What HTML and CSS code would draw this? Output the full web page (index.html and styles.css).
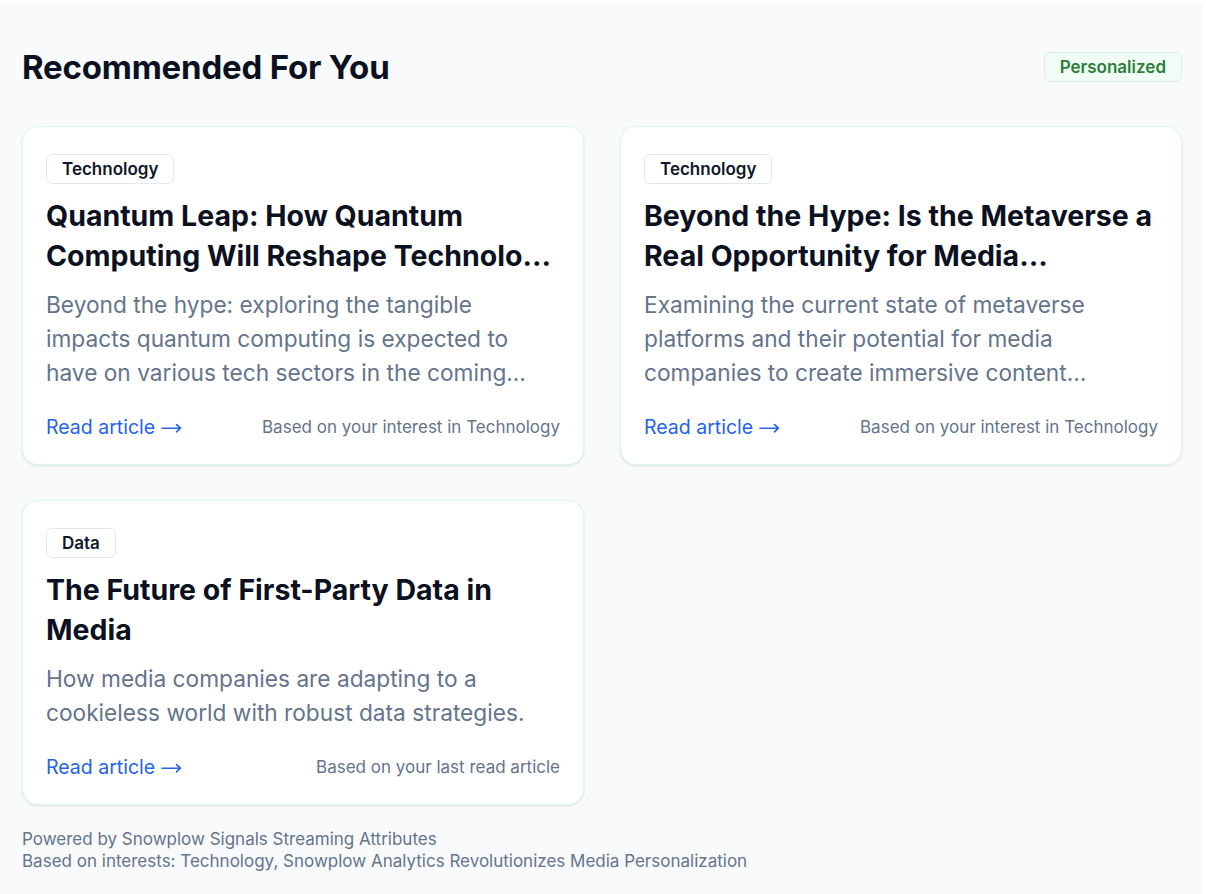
FILE: index.html
```html
<!DOCTYPE html>
<html lang="en">
<head>
<meta charset="utf-8">
<title>Recommended For You</title>
<link rel="stylesheet" href="styles.css">
</head>
<body>
<section class="panel">
  <header class="panel-head">
    <h2 class="panel-title">Recommended For You</h2>
    <span class="badge">Personalized</span>
  </header>
  <div class="grid">
    <article class="card">
      <span class="tag">Technology</span>
      <h3 class="card-title">Quantum Leap: How Quantum Computing Will Reshape Technology Industries in the Next Decade</h3>
      <p class="card-desc">Beyond the hype: exploring the tangible impacts quantum computing is expected to have on various tech sectors in the coming years and what it means for business.</p>
      <div class="card-foot">
        <a class="read" href="#">Read article<svg class="arrow" viewBox="0 0 21 10" width="21" height="10" aria-hidden="true"><path d="M1 5.2H19.5M15.5 1.6L19.5 5.2L15.5 8.8" fill="none" stroke="currentColor" stroke-width="1.6" stroke-linecap="round" stroke-linejoin="round"/></svg></a>
        <span class="reason">Based on your interest in Technology</span>
      </div>
    </article>
    <article class="card">
      <span class="tag">Technology</span>
      <h3 class="card-title">Beyond the Hype: Is the Metaverse a Real Opportunity for Media Companies?</h3>
      <p class="card-desc">Examining the current state of metaverse platforms and their potential for media companies to create immersive content experiences and new revenue streams.</p>
      <div class="card-foot">
        <a class="read" href="#">Read article<svg class="arrow" viewBox="0 0 21 10" width="21" height="10" aria-hidden="true"><path d="M1 5.2H19.5M15.5 1.6L19.5 5.2L15.5 8.8" fill="none" stroke="currentColor" stroke-width="1.6" stroke-linecap="round" stroke-linejoin="round"/></svg></a>
        <span class="reason">Based on your interest in Technology</span>
      </div>
    </article>
    <article class="card">
      <span class="tag">Data</span>
      <h3 class="card-title">The Future of First-Party Data in Media</h3>
      <p class="card-desc">How media companies are adapting to a cookieless world with robust data strategies.</p>
      <div class="card-foot">
        <a class="read" href="#">Read article<svg class="arrow" viewBox="0 0 21 10" width="21" height="10" aria-hidden="true"><path d="M1 5.2H19.5M15.5 1.6L19.5 5.2L15.5 8.8" fill="none" stroke="currentColor" stroke-width="1.6" stroke-linecap="round" stroke-linejoin="round"/></svg></a>
        <span class="reason">Based on your last read article</span>
      </div>
    </article>
  </div>
  <footer class="panel-foot">
    <div>Powered by Snowplow Signals Streaming Attributes</div>
    <div>Based on interests: Technology, Snowplow Analytics Revolutionizes Media Personalization</div>
  </footer>
</section>
</body>
</html>
```

FILE: styles.css
```css
* { box-sizing: border-box; }
html, body { margin: 0; padding: 0; background: #ffffff; }
body {
  font-family: Inter, "Noto Sans", "Liberation Sans", sans-serif;
  color: #0f172a;
}
.panel {
  margin: 4px 3px 0 0;
  background: #f8fafc;
  padding: 43px 21px 30px 22px;
  min-height: 890px;
}
.panel-head {
  display: flex;
  align-items: center;
  justify-content: space-between;
  height: 40px;
  margin-bottom: 39px;
}
.panel-title {
  margin: 0;
  font-size: 33px;
  font-weight: 700;
  letter-spacing: -0.2px;
  color: #0b1120;
  line-height: 40px;
}
.badge {
  display: inline-flex;
  align-items: center;
  height: 30px;
  padding: 0 15px;
  border: 1px solid #e2e8f0;
  border-radius: 6px;
  background: #f0fdf4;
  color: #2e7d3b;
  font-size: 17px;
  font-weight: 600;
}
.grid {
  display: grid;
  grid-template-columns: 1fr 1fr;
  column-gap: 36px;
  row-gap: 35px;
  align-items: start;
}
.card {
  background: #ffffff;
  border: 1px solid #dcfce7;
  border-radius: 16px;
  box-shadow: 0 1px 3px rgba(15, 23, 42, 0.08), 0 1px 2px rgba(15, 23, 42, 0.04);
  padding: 27px 23px 25px 23px;
  display: flex;
  flex-direction: column;
  align-items: flex-start;
}
.tag {
  display: inline-flex;
  align-items: center;
  height: 30px;
  padding: 0 15px;
  border: 1px solid #e2e8f0;
  border-radius: 6px;
  font-size: 17px;
  font-weight: 600;
  color: #0f172a;
  background: #ffffff;
}
.card-title {
  margin: 12px 0 0;
  font-size: 28.5px;
  line-height: 40px;
  font-weight: 700;
  color: #0b1120;
  display: -webkit-box;
  -webkit-line-clamp: 2;
  -webkit-box-orient: vertical;
  overflow: hidden;
}
.card-desc {
  margin: 12px 0 0;
  font-size: 22.7px;
  line-height: 34px;
  color: #64748b;
  display: -webkit-box;
  -webkit-line-clamp: 3;
  -webkit-box-orient: vertical;
  overflow: hidden;
}
.card-foot {
  margin-top: 25px;
  width: 100%;
  display: flex;
  align-items: center;
  justify-content: space-between;
  height: 24px;
}
.read {
  display: inline-flex;
  align-items: center;
  gap: 6px;
  color: #2563eb;
  text-decoration: none;
  font-size: 19.5px;
}
.arrow {
  display: block;
  margin-top: 1px;
}
.reason {
  color: #64748b;
  font-size: 17px;
}
.panel-foot {
  margin-top: 23px;
  font-size: 17px;
  line-height: 22px;
  color: #64748b;
}
```
